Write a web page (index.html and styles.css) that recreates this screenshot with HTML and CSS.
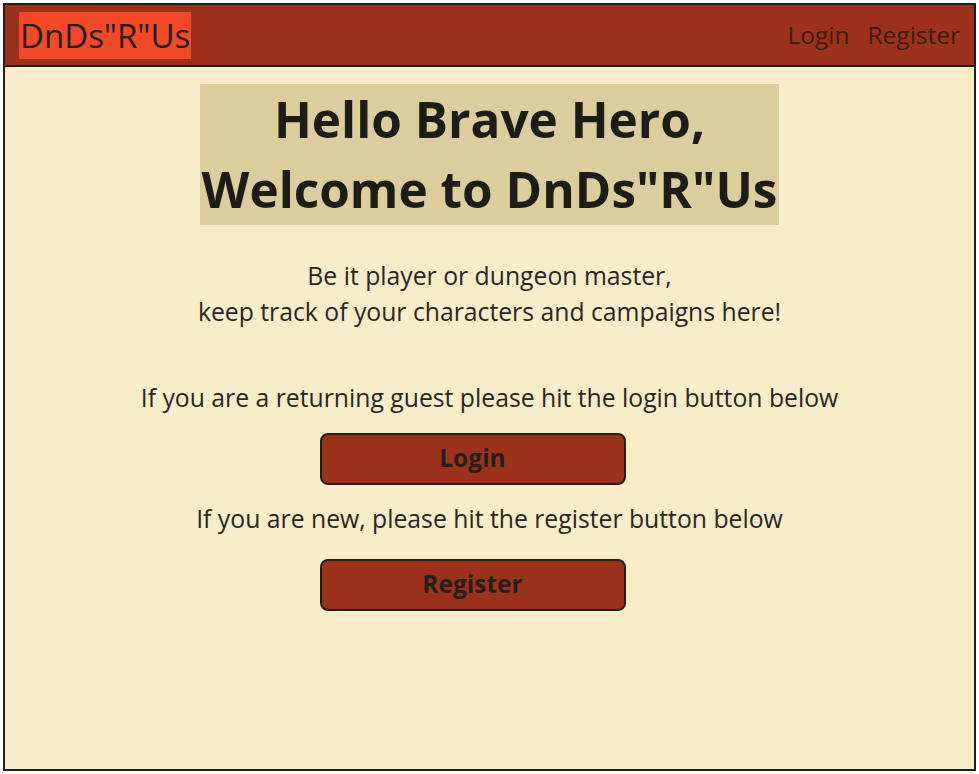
FILE: index.html
```html
<!DOCTYPE html>
<html lang="en">
<head>
<meta charset="utf-8">
<title>DnDs"R"Us</title>
<link rel="stylesheet" href="styles.css">
</head>
<body>
<div class="frame">
  <header class="topbar">
    <a class="brand" href="#">DnDs"R"Us</a>
    <nav class="nav">
      <a href="#">Login</a>
      <a href="#">Register</a>
    </nav>
  </header>
  <main class="main">
    <h1 class="title">Hello Brave Hero,<br>Welcome to DnDs"R"Us</h1>
    <p class="intro">Be it player or dungeon master,<br>keep track of your characters and campaigns here!</p>
    <p class="prompt prompt-first">If you are a returning guest please hit the login button below</p>
    <button class="btn btn-login">Login</button>
    <p class="prompt">If you are new, please hit the register button below</p>
    <button class="btn btn-register">Register</button>
  </main>
</div>
</body>
</html>
```
FILE: styles.css
```css
html, body {
  margin: 0;
  padding: 0;
  background: #ffffff;
}
body {
  padding: 3px;
  font-family: "Open Sans", "Liberation Sans", sans-serif;
  color: #2b2620;
}
.frame {
  box-sizing: border-box;
  height: 768px;
  border: 2px solid #221e1b;
  background: #f8edca;
  display: flex;
  flex-direction: column;
}
.topbar {
  height: 60px;
  background: #9c321c;
  border-bottom: 2px solid #221e1b;
  display: flex;
  align-items: center;
  justify-content: space-between;
  padding: 0 14px 0 14px;
}
.brand {
  background: #f24a28;
  color: #231f1a;
  text-decoration: none;
  font-size: 33px;
  font-weight: 400;
  height: 47px;
  line-height: 47px;
  padding: 0 1px;
}
.nav {
  display: flex;
  gap: 18px;
  padding-bottom: 2px;
}
.nav a {
  color: #3b1a10;
  text-decoration: none;
  font-size: 24.5px;
  font-weight: 400;
}
.main {
  display: flex;
  flex-direction: column;
  align-items: center;
  padding-top: 17px;
}
.title {
  margin: 0;
  background: #dbcd9c;
  font-size: 49.5px;
  font-weight: 700;
  line-height: 70px;
  text-align: center;
  padding: 0 2px 1px;
  color: #1f1c18;
}
.intro {
  margin: 33px 0 0;
  font-size: 24.75px;
  font-weight: 400;
  line-height: 36px;
  text-align: center;
}
.prompt {
  margin: 0;
  font-size: 24.75px;
  font-weight: 400;
  line-height: 36px;
  text-align: center;
}
.prompt-first {
  margin-top: 50px;
}
.btn {
  width: 306px;
  height: 52px;
  margin-right: 34px;
  background: #9c321c;
  border: 2px solid #221e1b;
  border-radius: 8px;
  color: #231f1a;
  font-family: "Open Sans", "Liberation Sans", sans-serif;
  font-size: 24.5px;
  font-weight: 700;
  padding: 0 0 4px;
}
.btn-login {
  margin-top: 17px;
  margin-bottom: 16px;
}
.btn-register {
  margin-top: 22px;
}
```
